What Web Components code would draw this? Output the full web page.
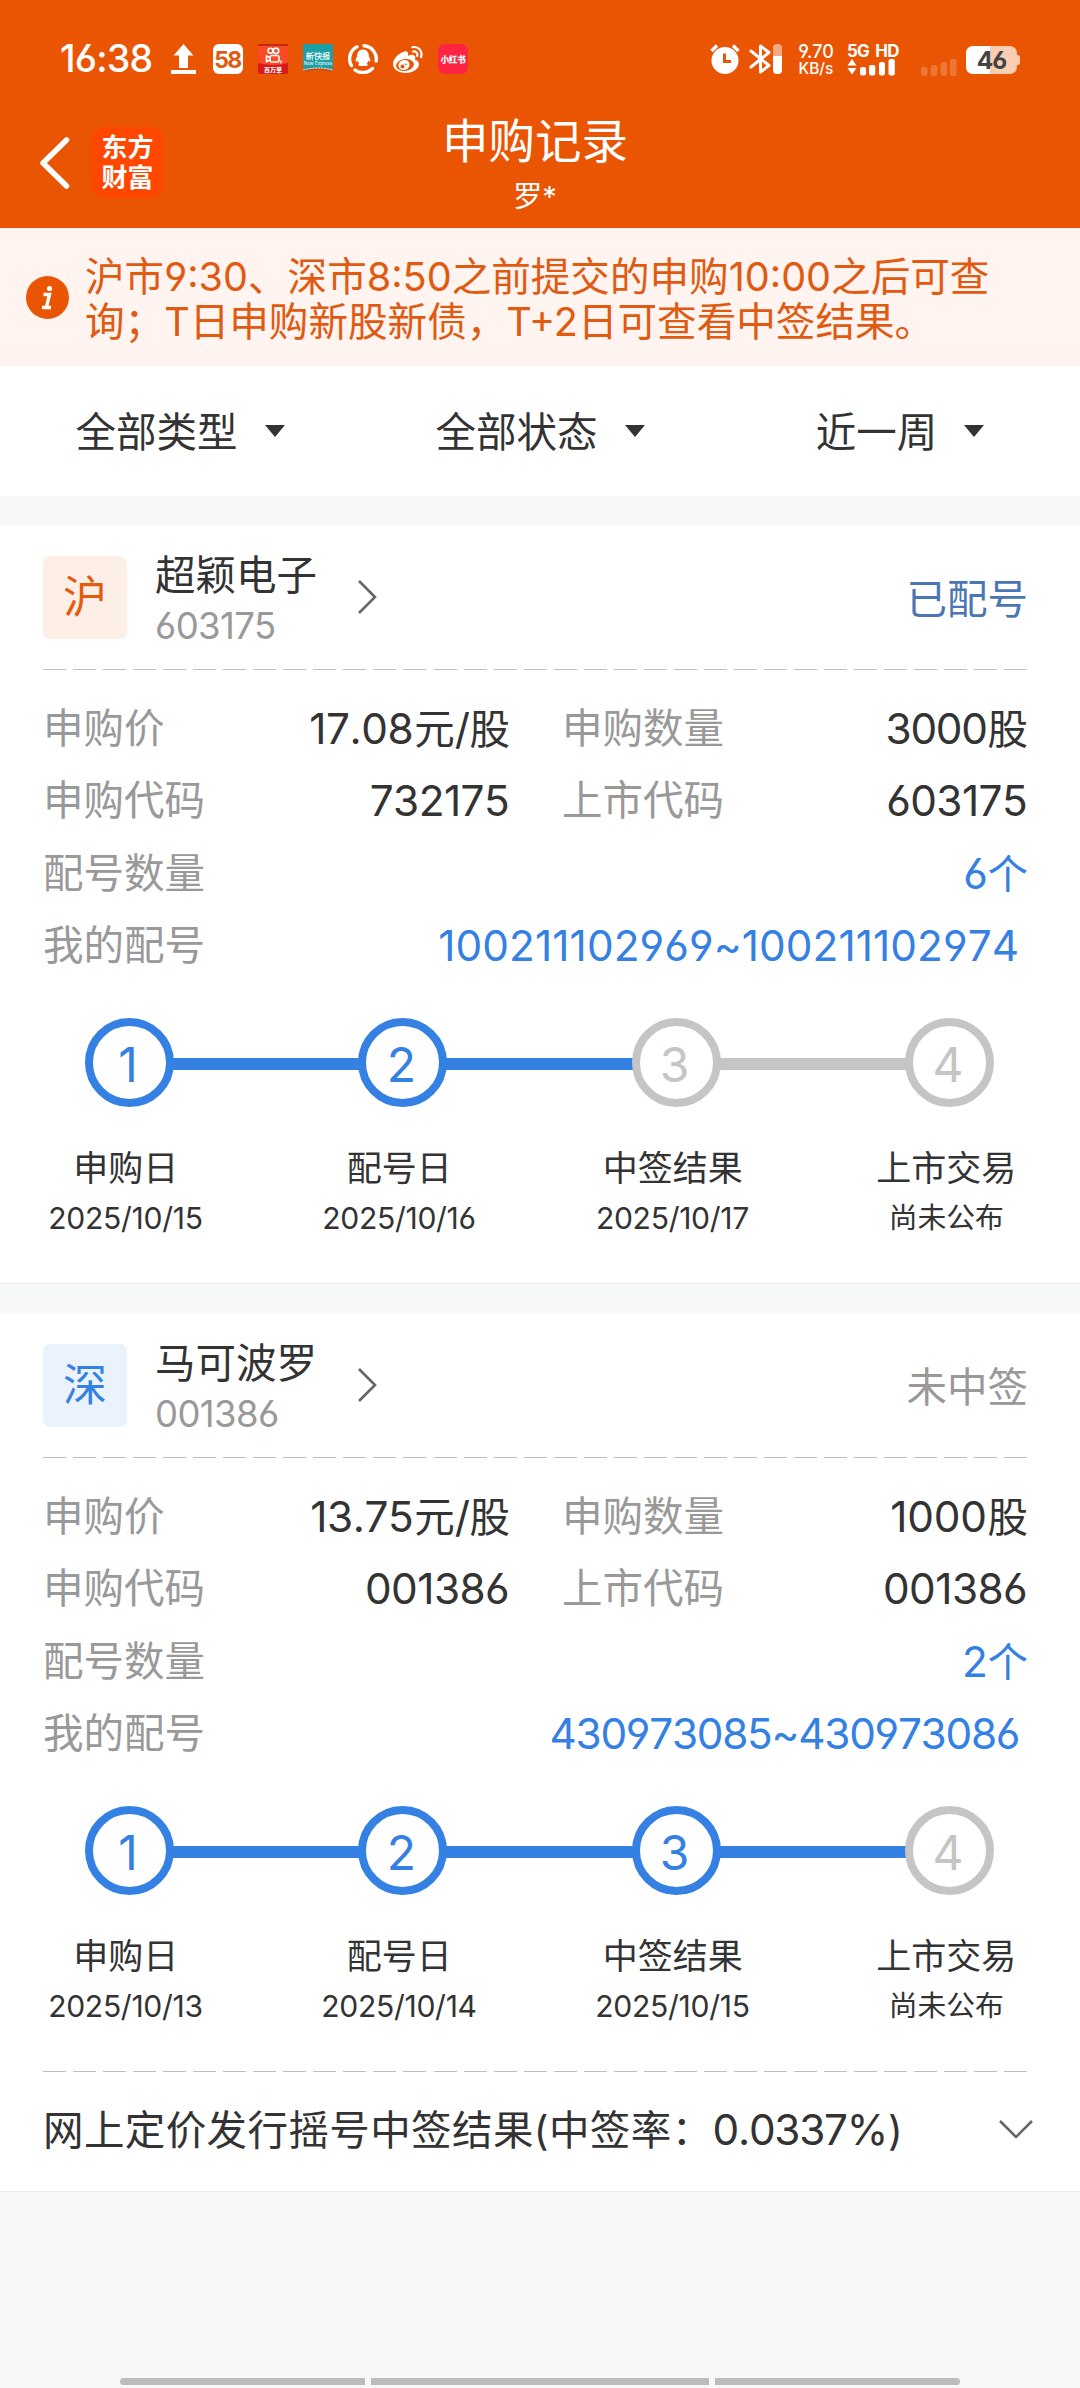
<!DOCTYPE html>
<html lang="zh-CN">
<head>
<meta charset="UTF-8">
<meta name="viewport" content="width=device-width, initial-scale=1.0">
<title>申购记录</title>
<style>
  :root {
    --color-brand: #ea5504;
    --color-text: #333;
    --color-muted: #999;
    --color-blue: #3480e3;
    --color-off: #c5c5c5;
    --color-page: #f7f8fa;
  }

  body {
    margin: 0;
    height: 2388px;
    display: flex;
    flex-direction: column;
    background: var(--color-page);
    color: var(--color-text);
    font-family: Inter, "Noto Sans CJK SC", sans-serif;
    font-size: 40.5px;
    font-feature-settings: "cv03", "cv04";
    overflow: hidden;
  }
</style>
</head>
<body>
  <page-header name="申购记录" user="罗*"></page-header>
  <notice-bar>
    <span>沪市9:30、深市8:50之前提交的申购10:00之后可查</span>
    <span>询；T日申购新股新债，T+2日可查看中签结果。</span>
  </notice-bar>
  <filter-bar>
    <filter-item>全部类型</filter-item>
    <filter-item>全部状态</filter-item>
    <filter-item>近一周</filter-item>
  </filter-bar>

  <stock-card market="沪" name="超颖电子" code="603175" status="已配号">
    <info-grid price="17.08元/股" amount="3000股" apply-code="732175" list-code="603175"
      count="6个" numbers="100211102969~100211102974"></info-grid>
    <step-track done="2" reached="2" dates="2025/10/15,2025/10/16,2025/10/17,尚未公布"></step-track>
  </stock-card>

  <stock-card market="深" name="马可波罗" code="001386" status="未中签">
    <info-grid price="13.75元/股" amount="1000股" apply-code="001386" list-code="001386"
      count="2个" numbers="430973085~430973086"></info-grid>
    <step-track done="3" reached="3" dates="2025/10/13,2025/10/14,2025/10/15,尚未公布"></step-track>
    <result-row slot="footer">网上定价发行摇号中签结果(中签率：0.0337%)</result-row>
  </stock-card>

  <nav-pills></nav-pills>

<script>
// Digits are set a little larger and tighter than the Chinese text around them
const numStyle = `
  .n {
    font-size: 1.045em;
    margin-right: 0.02em;
    font-kerning: none;
  }
`;

// The "1" is narrow, so runs with many of them get more letter spacing
const num = (text) =>
  text.replace(/[0-9.\/~:%]+/g, (run) => {
    const ones = run.split("1").length - 1;
    const spacing = (-0.03 + (0.1 * ones) / run.length).toFixed(3);
    return `<span class="n" style="letter-spacing: ${spacing}em">${run}</span>`;
  });

class StatusBar extends HTMLElement {
  constructor() {
    super();
    this.attachShadow({ mode: "open" });
  }

  connectedCallback() {
    this.shadowRoot.innerHTML = `
      <style>
        :host {
          display: flex;
          align-items: center;
          height: 118px;
          padding: 0 60px;
          box-sizing: border-box;
          color: #fff;
        }
        svg { display: block; flex: none; }
        .time {
          width: 110px;
          font-size: 37.5px;
          font-weight: 500;
          letter-spacing: -0.8px;
          line-height: 1;
        }
        .apps { display: flex; gap: 15px; }
        .right { display: flex; align-items: center; margin-left: auto; }
        .speed {
          margin-left: 14px;
          width: 38px;
          font-size: 18px;
          line-height: 18px;
          font-weight: 500;
          text-align: center;
        }
        .speed small { display: block; font-size: 15.5px; line-height: 15px; }
        .signal { margin-left: 12px; width: 50px; }
        .signal b {
          display: block;
          font-size: 17px;
          line-height: 16px;
          white-space: nowrap;
          letter-spacing: -0.8px;
          word-spacing: 3px;
        }
      </style>
      <div class="time">16:38</div>
      <div class="apps">
        <svg width="28" height="30" viewBox="0 0 28 30" fill="#fff">
          <path d="M13.500 0 L23.500 11.500 H18 V24 H9 V11.500 H3.500 Z M1 26 H26 V30 H1 Z"/>
        </svg>
        <svg width="30" height="30" viewBox="0 0 30 30">
          <rect width="30" height="30" rx="6" fill="#fff"/>
          <text x="14.500" y="23.500" text-anchor="middle" font-family="Inter" font-weight="700" font-size="23" letter-spacing="-1.600" fill="#e05a10">58</text>
        </svg>
        <svg width="30" height="30" viewBox="0 0 30 30">
          <rect width="30" height="30" rx="2" fill="#fb4a25"/>
          <rect width="30" height="2" fill="#c32a12"/>
          <path d="M0 19 Q15 23 30 19 V28 Q30 30 28 30 H2 Q0 30 0 28 Z" fill="#d81a1a"/>
          <g fill="none" stroke="#fff" stroke-width="1.600">
            <circle cx="12.500" cy="6.800" r="2.500"/><circle cx="18" cy="6.800" r="2.700"/>
            <rect x="12" y="11.500" width="9" height="6.500" rx="2"/>
            <path d="M12 13.500 L8.500 12 V17.500 L12 16"/>
          </g>
          <path d="M22.500 16.500 h1.600 l-1 3 h-1 z" fill="#fff"/>
          <text x="15" y="28" text-anchor="middle" font-family="Noto Sans CJK SC" font-weight="900" font-size="6" fill="#fff">百万单</text>
        </svg>
        <svg width="30" height="30" viewBox="0 0 30 30">
          <path d="M0 0 H30 V26 Q15 22 0 26 Z" fill="#1d9fa6"/>
          <path d="M0 26 Q15 22 30 26 L28 28 Q15 25 2 28 Z" fill="#c4511c"/>
          <path d="M.5 26 Q15 22 29.500 26" fill="none" stroke="#fff" stroke-width="1" stroke-dasharray="2 1"/>
          <text x="15" y="14.500" text-anchor="middle" font-family="Noto Sans CJK SC" font-weight="500" font-size="8.200" fill="#fff">新快报</text>
          <text x="15" y="20.500" text-anchor="middle" font-family="Inter" font-size="4.600" fill="#fff">New Express</text>
        </svg>
        <svg width="30" height="30" viewBox="0 0 30 30">
          <g fill="none" stroke="#fff" stroke-linecap="round">
            <path d="M9 2.800 A13.400 13.400 0 0 0 3.400 21.500" stroke-width="3.400"/>
            <path d="M16 1.700 A13.400 13.400 0 0 1 28.200 17" stroke-width="3.400"/>
            <path d="M7 26 A13.400 13.400 0 0 0 24.500 24.500" stroke-width="3.400"/>
          </g>
          <path d="M15 5.500 C11 5.500 9 8.500 9.100 12.500 C7.800 14.600 7.200 16.800 7.900 17.600 C8.400 17.900 9.100 17.200 9.700 16.500 C9.800 17.800 10.400 18.800 11.200 19.600 C9.800 20.300 10 22 12 22 H18 C20 22 20.200 20.300 18.800 19.600 C19.600 18.800 20.200 17.800 20.300 16.500 C20.900 17.200 21.600 17.900 22.100 17.600 C22.800 16.800 22.200 14.600 20.900 12.500 C21 8.500 19 5.500 15 5.500 Z" fill="#fff"/>
        </svg>
        <svg width="30" height="30" viewBox="0 0 30 30">
          <path d="M11.500 7.500 C5.500 9 0 15 0 20 C0 25.500 6 29 12.500 29 C20.500 29 26 24.500 26 20.300 C26 17.500 23.800 16.300 22 15.700 C23 13 22 11 19.500 10.800 C17.800 10.700 16.500 11.200 15 11.800 C15.500 8.500 14.500 6.800 11.500 7.500 Z" fill="#fff"/>
          <ellipse cx="12" cy="21" rx="9" ry="6" transform="rotate(-8 12 21)" fill="#ea5504"/>
          <ellipse cx="11" cy="21" rx="5.600" ry="5" transform="rotate(-20 11 21)" fill="#fff"/>
          <circle cx="9.500" cy="22.500" r="2" fill="#ea5504"/>
          <circle cx="13" cy="20.300" r=".9" fill="#ea5504"/>
          <g fill="none" stroke="#fff" stroke-width="2.200" stroke-linecap="round">
            <path d="M19.500 3.200 C25.500 2 30 7 28 13"/>
            <path d="M20 7.500 C23 7 25 9 24.200 12"/>
          </g>
        </svg>
        <svg width="30" height="30" viewBox="0 0 30 30">
          <rect width="30" height="30" rx="6.500" fill="#ff2442"/>
          <text x="15" y="18.600" text-anchor="middle" font-family="Noto Sans CJK SC" font-weight="900" font-size="8.600" letter-spacing="-.3" fill="#fff">小红书</text>
        </svg>
      </div>
      <div class="right">
        <svg width="30" height="30" viewBox="0 0 30 30">
          <circle cx="15" cy="16.500" r="13.500" fill="#fff"/>
          <path d="M1.500 7 L7 1.500 M28.500 7 L23 1.500" stroke="#fff" stroke-width="3.400" fill="none"/>
          <path d="M14.500 9.500 V17.500 H21" stroke="#ea5504" stroke-width="3" fill="none"/>
        </svg>
        <svg width="34" height="30" viewBox="0 0 34 30" style="margin-left: 9px">
          <path d="M2 7 L20 21.500 L11.500 28 V2 L20 8.500 L2 23" fill="none" stroke="#fff" stroke-width="3" stroke-linejoin="round" stroke-linecap="round"/>
          <rect x="24" y="0" width="9" height="30" rx="4" fill="#fff" fill-opacity=".5"/>
          <path d="M24 12 H33 V26 Q33 30 28.500 30 Q24 30 24 26 Z" fill="#fff"/>
        </svg>
        <div class="speed">9.70<small>KB/s</small></div>
        <div class="signal">
          <b>5G HD</b>
          <svg width="48" height="17" viewBox="0 0 48 17" fill="#fff">
            <path d="M5 0 L9.500 6.500 H.5 Z M5 15.500 L9.500 9 H.5 Z"/>
            <rect x="13" y="8" width="6" height="8.500" rx="2"/>
            <rect x="22" y="6" width="6.300" height="10.500" rx="2"/>
            <rect x="32" y="3" width="6" height="13.500" rx="2"/>
            <rect x="41.500" y="0" width="6.300" height="16.500" rx="2"/>
          </svg>
        </div>
        <svg width="37" height="33" viewBox="0 0 37 33" fill="#fff" fill-opacity=".2" style="margin-left: 24px">
          <rect x="0" y="24" width="6.500" height="9" rx="2"/>
          <rect x="9.700" y="22" width="6.500" height="11" rx="2"/>
          <rect x="19.500" y="19" width="6.500" height="14" rx="2"/>
          <rect x="29" y="16" width="6.500" height="17" rx="2"/>
        </svg>
        <svg width="54" height="28" viewBox="0 0 54 28" style="margin: 2px 0 0 8px">
          <path d="M8 0 H43 Q51 0 51 8 V9 Q54 9 54 11 V17 Q54 19 51 19 V20 Q51 28 43 28 H8 Q0 28 0 20 V8 Q0 0 8 0 Z" fill="#fbceb4"/>
          <path d="M8 0 H24 V28 H8 Q0 28 0 20 V8 Q0 0 8 0 Z" fill="#fff"/>
          <text x="25.500" y="23" text-anchor="middle" font-family="Inter" font-weight="700" font-size="24.500" letter-spacing="-1" fill="#444">46</text>
        </svg>
      </div>
    `;
  }
}

class PageHeader extends HTMLElement {
  constructor() {
    super();
    this.attachShadow({ mode: "open" });
  }

  connectedCallback() {
    this.shadowRoot.innerHTML = `
      <style>
        :host {
          display: block;
          height: 228px;
          background: var(--color-brand);
          color: #fff;
        }
        .bar {
          display: grid;
          grid-template-columns: 435px 200px 1fr;
          height: 110px;
        }
        .left { display: flex; align-items: flex-start; padding: 9px 0 0 38px; }
        .back { margin-top: 8px; }
        .logo {
          width: 71px;
          height: 71px;
          margin-left: 20px;
          border-radius: 13px;
          background: #ff4700;
          font: 700 26px/30px "Liberation Sans", "Noto Sans CJK SC", sans-serif;
          text-align: center;
          padding-top: 6px;
          box-sizing: border-box;
        }
        .title { text-align: center; }
        h1 {
          margin: -2px 0 0;
          font-size: 46.5px;
          font-weight: 400;
          line-height: 50px;
        }
        p { margin: 10px 0 0; font-size: 29px; line-height: 42px; }
      </style>
      <status-bar></status-bar>
      <div class="bar">
        <div class="left">
          <svg class="back" width="34" height="56" viewBox="0 0 34 56" fill="none" stroke="#fff" stroke-width="5.500" stroke-linecap="round" stroke-linejoin="round">
            <path d="M28.500 5 L5 28 L28.500 51"/>
          </svg>
          <div class="logo">东方<br>财富</div>
        </div>
        <div class="title">
          <h1>${this.getAttribute("name")}</h1>
          <p>${this.getAttribute("user")}</p>
        </div>
      </div>
    `;
  }
}

class NoticeBar extends HTMLElement {
  constructor() {
    super();
    this.attachShadow({ mode: "open" });
  }

  connectedCallback() {
    this.shadowRoot.innerHTML = `
      <style>
        :host {
          display: flex;
          align-items: center;
          gap: 16px;
          height: 138px;
          padding-left: 26px;
          background: #fff4ef;
          color: #e05a12;
        }
        svg { flex: none; }
        .text { display: flex; flex-direction: column; padding-top: 5px; }
        ::slotted(span) {
          font-size: 39.6px;
          line-height: 44.5px;
          white-space: nowrap;
        }
      </style>
      <svg width="43" height="43" viewBox="0 0 43 43">
        <circle cx="21.500" cy="21.500" r="21.500" fill="#ea5504"/>
        <circle cx="23.500" cy="12.500" r="2.600" fill="#fff"/>
        <path d="M17.500 18.500 H23.500 L20.500 31 M16 31.500 H25" fill="none" stroke="#fff" stroke-width="3.400"/>
      </svg>
      <div class="text"><slot></slot></div>
    `;
  }
}

class FilterBar extends HTMLElement {
  constructor() {
    super();
    this.attachShadow({ mode: "open" });
    this.shadowRoot.innerHTML = `
      <style>
        :host {
          display: grid;
          grid-template-columns: repeat(3, 1fr);
          height: 130px;
          background: #fff;
        }
      </style>
      <slot></slot>
    `;
  }
}

class FilterItem extends HTMLElement {
  constructor() {
    super();
    this.attachShadow({ mode: "open" });
    this.shadowRoot.innerHTML = `
      <style>
        :host {
          display: flex;
          align-items: center;
          justify-content: center;
          gap: 27px;
          line-height: 50px;
        }
        span { padding-top: 4px; }
        i {
          border: 10px solid transparent;
          border-top: 12px solid #333;
          border-bottom: 0;
        }
      </style>
      <span><slot></slot></span><i></i>
    `;
  }
}

class StockCard extends HTMLElement {
  constructor() {
    super();
    this.attachShadow({ mode: "open" });
  }

  connectedCallback() {
    const market = this.getAttribute("market");
    const status = this.getAttribute("status");
    const sh = market === "沪";

    this.shadowRoot.innerHTML = `
      <style>
        :host {
          display: block;
          margin-top: 29px;
          background: #fff;
          border-bottom: 1px solid #ececee;
        }
        header {
          display: flex;
          align-items: center;
          height: 144px;
          padding: 0 52px 0 43px;
        }
        .tag {
          width: 84px;
          height: 83px;
          border-radius: 7px;
          font-size: 44px;
          line-height: 83px;
          text-align: center;
          background: ${sh ? "#fdeee6" : "#eaf2fc"};
          color: ${sh ? "#e55a0c" : "var(--color-blue)"};
        }
        .name { margin-left: 28px; padding-top: 8px; line-height: 50px; width: 162px; }
        .code {
          font-size: 36.5px;
          line-height: 51px;
          letter-spacing: -0.6px;
          color: var(--color-muted);
        }
        .go { margin-left: 40px; }
        .status {
          margin-left: auto;
          padding-bottom: 2px;
          color: ${status === "已配号" ? "#4a77b4" : "var(--color-muted)"};
        }
        .dash {
          height: 1px;
          margin: 0 51px 0 43px;
          background: repeating-linear-gradient(90deg, #bfbfbf 0 23px, transparent 23px 30.04px);
        }
      </style>
      <header>
        <div class="tag">${market}</div>
        <div class="name">${this.getAttribute("name")}<div class="code">${this.getAttribute("code")}</div></div>
        <svg class="go" width="22" height="36" viewBox="0 0 22 36" fill="none" stroke="#666" stroke-width="2.600">
          <path d="M2 2 L18 18 L2 34"/>
        </svg>
        <div class="status">${status}</div>
      </header>
      <div class="dash"></div>
      <slot></slot>
      <slot name="footer"></slot>
    `;
  }
}

class InfoGrid extends HTMLElement {
  constructor() {
    super();
    this.attachShadow({ mode: "open" });
  }

  connectedCallback() {
    const row = (label, attr, cls = "") => `
      <div class="row ${cls}">
        <span class="label">${label}</span>
        <span>${num(this.getAttribute(attr))}</span>
      </div>`;

    this.shadowRoot.innerHTML = `
      <style>
        :host {
          display: grid;
          grid-template-columns: 467px 466px;
          column-gap: 52px;
          grid-auto-rows: 72.25px;
          height: 288px;
          padding: 23px 0 0 43px;
        }
        .row {
          display: flex;
          justify-content: space-between;
          line-height: 72px;
          white-space: nowrap;
        }
        .wide { grid-column: 1 / 3; color: var(--color-blue); }
        .numbers { padding-right: 8px; }
        .label { color: var(--color-muted); }
        ${numStyle}
      </style>
      ${row("申购价", "price")}
      ${row("申购数量", "amount")}
      ${row("申购代码", "apply-code")}
      ${row("上市代码", "list-code")}
      ${row("配号数量", "count", "wide")}
      ${row("我的配号", "numbers", "wide numbers")}
    `;
  }
}

class StepTrack extends HTMLElement {
  constructor() {
    super();
    this.attachShadow({ mode: "open" });
  }

  connectedCallback() {
    const done = Number(this.getAttribute("done"));
    const reached = Number(this.getAttribute("reached"));
    const dates = this.getAttribute("dates").split(",");
    const labels = ["申购日", "配号日", "中签结果", "上市交易"];

    const track = labels
      .map((_, i) => {
        const bar = i ? `<div class="bar ${i <= reached ? "on" : ""}"></div>` : "";
        return `${bar}<div class="dot ${i < done ? "on" : ""}">${i + 1}</div>`;
      })
      .join("");

    this.shadowRoot.innerHTML = `
      <style>
        :host { display: block; padding: 37px 0 39px; }
        .track {
          display: flex;
          align-items: center;
          margin: 0 86px 0 85px;
          color: var(--color-off);
        }
        .dot {
          box-sizing: border-box;
          width: 89px;
          height: 89px;
          flex: none;
          padding-right: 3px;
          border: 8.5px solid currentColor;
          border-radius: 50%;
          font-size: 48px;
          line-height: 78px;
          text-align: center;
        }
        .bar { flex: 1; height: 12px; margin: 3px -1px 0; background: currentColor; }
        .on { color: var(--color-blue); }
        .labels {
          display: grid;
          grid-template-columns: repeat(4, 273.5px);
          grid-auto-rows: 100px;
          margin: 37px -20px 0 -11px;
          text-align: center;
          font-size: 35px;
          line-height: 49px;
        }
        .labels div + div { font-size: 28.8px; line-height: 50px; }
        ${numStyle}
      </style>
      <div class="track">${track}</div>
      <div class="labels">
        ${labels.map((t, i) => `<section><div>${t}</div><div>${num(dates[i])}</div></section>`).join("")}
      </div>
    `;
  }
}

class ResultRow extends HTMLElement {
  constructor() {
    super();
    this.attachShadow({ mode: "open" });
  }

  connectedCallback() {
    this.shadowRoot.innerHTML = `
      <style>
        :host { display: block; }
        .dash {
          height: 1px;
          margin: 0 51px 0 43px;
          background: repeating-linear-gradient(90deg, #bfbfbf 0 23px, transparent 23px 30.04px);
        }
        .row {
          display: flex;
          align-items: center;
          justify-content: space-between;
          box-sizing: border-box;
          height: 119px;
          padding: 0 46px 3px 43px;
          line-height: 50px;
          letter-spacing: 0.4px;
          white-space: nowrap;
        }
        ${numStyle}
      </style>
      <div class="dash"></div>
      <div class="row">
        <span>${num(this.textContent)}</span>
        <svg width="36" height="22" viewBox="0 0 36 22" fill="none" stroke="#666" stroke-width="2.600">
          <path d="M2 2 L18 18 L34 2"/>
        </svg>
      </div>
    `;
  }
}

class NavPills extends HTMLElement {
  constructor() {
    super();
    this.attachShadow({ mode: "open" });
    this.shadowRoot.innerHTML = `
      <style>
        :host {
          display: grid;
          grid-template-columns: 245px 338px 245px;
          justify-content: center;
          gap: 6px;
          margin-top: auto;
          padding-bottom: 3px;
        }
        i { height: 7px; background: #bbbcbe; }
        i:first-of-type { border-radius: 4px 0 0 4px; }
        i:last-of-type { border-radius: 0 4px 4px 0; }
      </style>
      <i></i><i></i><i></i>
    `;
  }
}

customElements.define("status-bar", StatusBar);
customElements.define("page-header", PageHeader);
customElements.define("notice-bar", NoticeBar);
customElements.define("filter-bar", FilterBar);
customElements.define("filter-item", FilterItem);
customElements.define("stock-card", StockCard);
customElements.define("info-grid", InfoGrid);
customElements.define("step-track", StepTrack);
customElements.define("result-row", ResultRow);
customElements.define("nav-pills", NavPills);
</script>
</body>
</html>
